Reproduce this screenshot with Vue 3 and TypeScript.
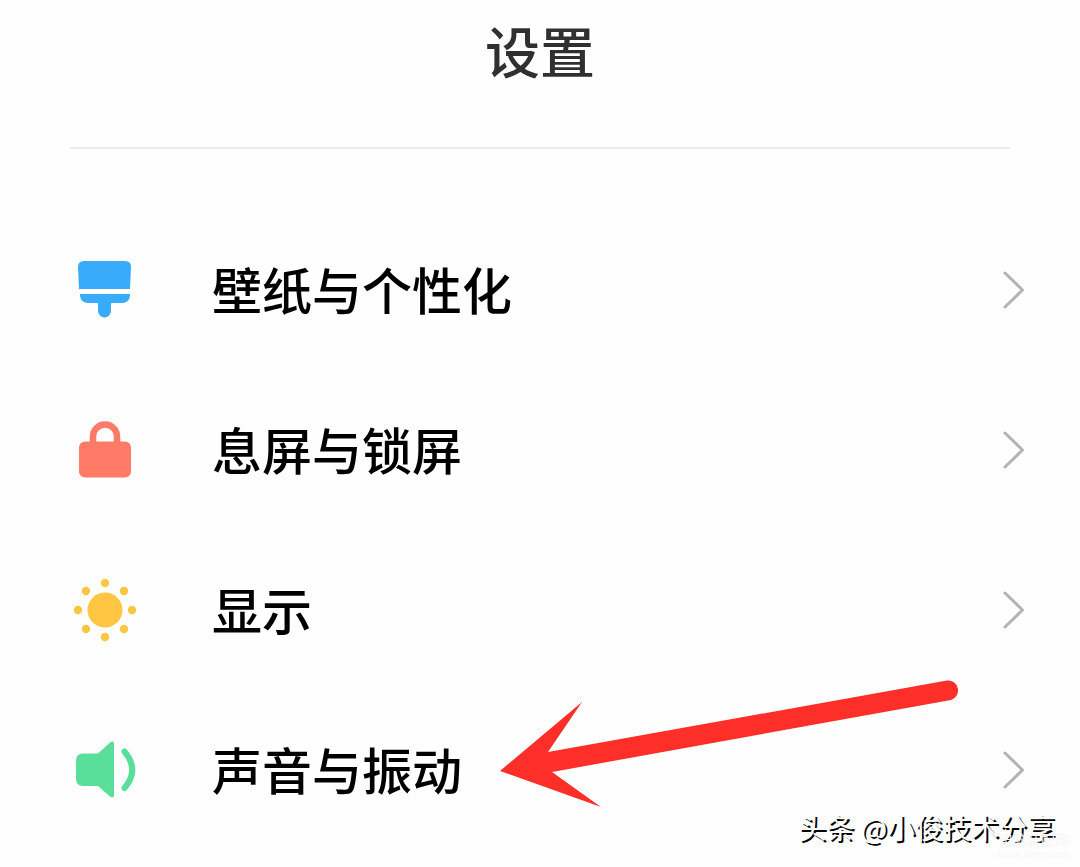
<script setup lang="ts">
type IconName = 'brush' | 'lock' | 'sun' | 'speaker'

interface SettingItem {
  icon: IconName
  label: string
  pointed?: boolean
}

const items: SettingItem[] = [
  { icon: 'brush', label: '壁纸与个性化' },
  { icon: 'lock', label: '息屏与锁屏' },
  { icon: 'sun', label: '显示' },
  { icon: 'speaker', label: '声音与振动', pointed: true },
]
</script>

<template>
  <main class="page">
    <header class="header">
      <h1 class="title">设置</h1>
    </header>
    <ul class="list">
      <li v-for="item in items" :key="item.icon" class="item">
        <button type="button" class="row">
          <svg class="icon" viewBox="0 0 70 70" aria-hidden="true">
            <g v-if="item.icon === 'brush'" fill="#38acfb">
              <path d="M9 34L8 12Q8 6 14 6H55Q61 6 61 12L60 34Z" />
              <path d="M10 39H60V41Q59 48 52 48H41V56A6.500 6.500 0 0 1 28 56V48H18Q11 48 10 41Z" />
            </g>
            <g v-else-if="item.icon === 'lock'">
              <path d="M23 30V21.500A12 12 0 0 1 47 21.500V30" fill="none" stroke="#ff7b68" stroke-width="6.500" />
              <rect x="9" y="26.500" width="52" height="36" rx="6" fill="#ff7b68" />
            </g>
            <g v-else-if="item.icon === 'sun'" fill="#ffc643">
              <circle cx="35" cy="35" r="17.500" />
              <circle cx="35" cy="8" r="4.200" />
              <circle cx="54" cy="16" r="4.200" />
              <circle cx="62" cy="35" r="4.200" />
              <circle cx="54" cy="54" r="4.200" />
              <circle cx="35" cy="62" r="4.200" />
              <circle cx="16" cy="54" r="4.200" />
              <circle cx="8" cy="35" r="4.200" />
              <circle cx="16" cy="16" r="4.200" />
            </g>
            <g v-else>
              <path d="M13 18.500H28L40 7.500Q44 5 44 9V60Q44 64 40 61.500L28 51H13Q6 51 6 44V25.500Q6 18.500 13 18.500Z" fill="#5adf9a" />
              <path d="M54.500 16.500Q70 35 54.500 53" fill="none" stroke="#5adf9a" stroke-width="6" stroke-linecap="round" />
            </g>
          </svg>
          <span class="label">{{ item.label }}</span>
          <svg class="chevron" viewBox="0 0 24 40" aria-hidden="true">
            <path d="M3 3L20.500 20L3 37" fill="none" stroke="#b3b3b3" stroke-width="3" stroke-linecap="round" stroke-linejoin="round" />
          </svg>
        </button>
        <svg v-if="item.pointed" class="arrow" viewBox="0 0 460 128" aria-hidden="true">
          <path d="M0 91L82 22L48 72L447 0.500A10 10 0 0 1 451 20L52 92L101 127Z" fill="#fd2f28" />
        </svg>
      </li>
    </ul>
    <p class="credit">头条 @小俊技术分享</p>
    <p class="site"><span class="site-name">电脑装配网</span><span>www.dnzp.com</span></p>
  </main>
</template>

<style>
body {
  margin: 0;
  background: #fefefe;
}
</style>

<style scoped>
.page {
  position: relative;
  box-sizing: border-box;
  min-height: 100vh;
  overflow: hidden;
  font-family: "Noto Sans CJK SC", sans-serif;
  background: #fefefe;
}

.header {
  margin: 0 70px;
  padding: 9px 0 58px;
  border-bottom: 2px solid #ececec;
}

.title {
  margin: 0;
  font-size: 55px;
  font-weight: 500;
  line-height: 80px;
  text-align: center;
  color: #303030;
}

.list {
  margin: 0;
  padding: 61px 0 0;
  list-style: none;
}

.item {
  position: relative;
}

.row {
  display: flex;
  align-items: center;
  box-sizing: border-box;
  width: 100%;
  height: 160px;
  padding: 0 54px 0 70px;
  border: 0;
  background: none;
  font: inherit;
  color: #000;
  text-align: left;
  cursor: pointer;
}

.icon {
  flex: none;
  width: 70px;
  height: 70px;
}

.label {
  flex: 1;
  margin-left: 72px;
  padding-bottom: 4px;
  font-size: 50px;
  font-weight: 500;
  line-height: 72px;
}

.chevron {
  flex: none;
  width: 24px;
  height: 40px;
}

.arrow {
  position: absolute;
  top: -10px;
  left: 500px;
  width: 460px;
  height: 128px;
  pointer-events: none;
}

.credit {
  position: absolute;
  right: 25px;
  bottom: 20px;
  margin: 0;
  font-size: 28px;
  line-height: 40px;
  color: #fefefe;
  text-shadow: 2px 2px 0 #050505;
  white-space: nowrap;
}

.site {
  position: absolute;
  right: 10px;
  bottom: 6px;
  display: flex;
  flex-direction: column;
  align-items: center;
  margin: 0;
  font-size: 10px;
  line-height: 14px;
  color: #f6f6f6;
}

.site-name {
  font-size: 14px;
  line-height: 16px;
}
</style>
